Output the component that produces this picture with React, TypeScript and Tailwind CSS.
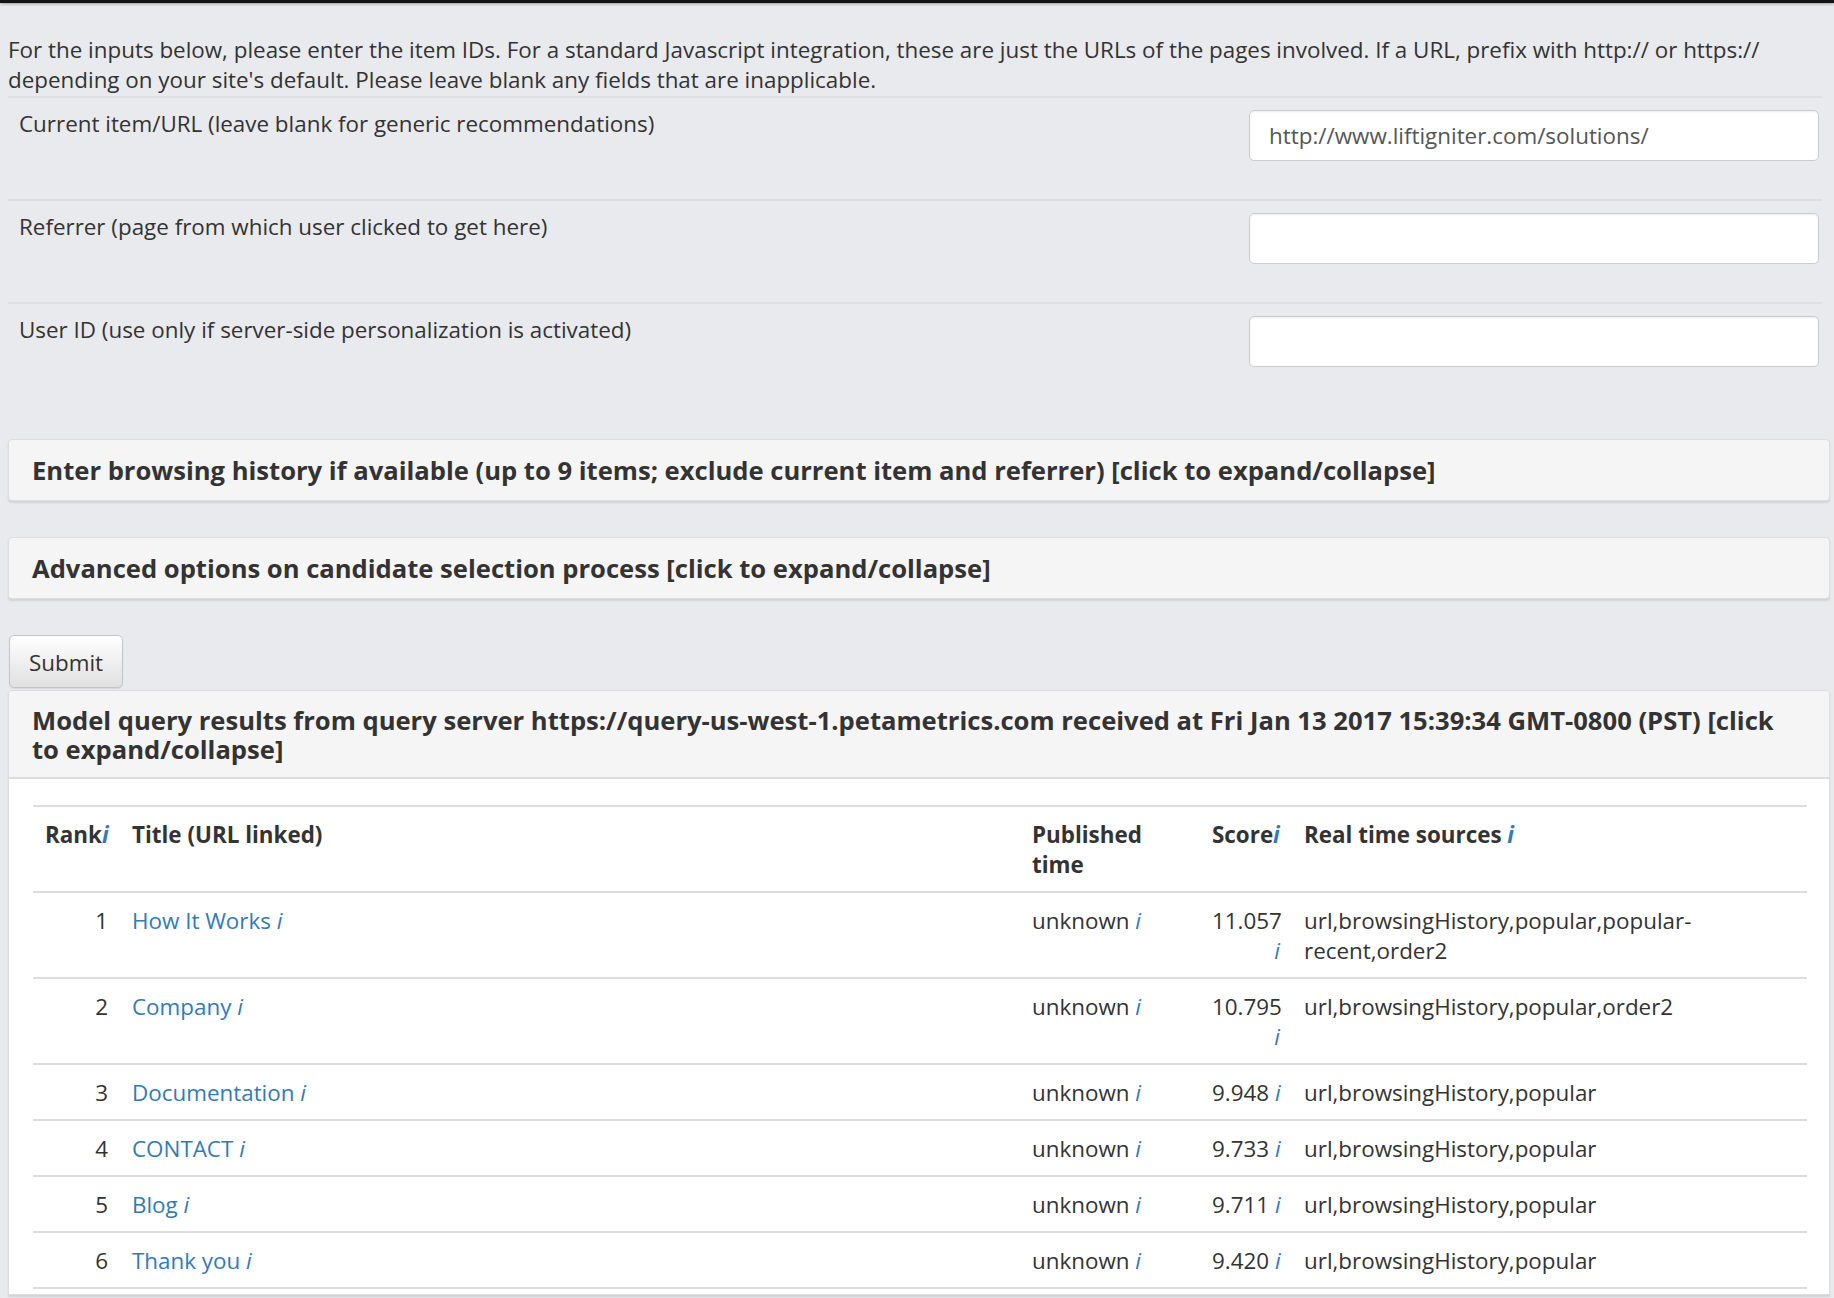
import React from "react";

type Row = {
  rank: number;
  title: string;
  score: string;
  wrapScore?: boolean;
  sources: React.ReactNode;
};

const rows: Row[] = [
  {
    rank: 1,
    title: "How It Works",
    score: "11.057",
    wrapScore: true,
    sources: (
      <>
        url,browsingHistory,popular,popular-
        <br />
        recent,order2
      </>
    ),
  },
  { rank: 2, title: "Company", score: "10.795", wrapScore: true, sources: "url,browsingHistory,popular,order2" },
  { rank: 3, title: "Documentation", score: "9.948", sources: "url,browsingHistory,popular" },
  { rank: 4, title: "CONTACT", score: "9.733", sources: "url,browsingHistory,popular" },
  { rank: 5, title: "Blog", score: "9.711", sources: "url,browsingHistory,popular" },
  { rank: 6, title: "Thank you", score: "9.420", sources: "url,browsingHistory,popular" },
];

function Info() {
  return <i className="text-[#337ab7]">i</i>;
}

function FieldRow(props: { label: string; value?: string }) {
  return (
    <div className="flex items-start justify-between h-[103px] mr-[8px] border-t-2 border-[#dedfe1] pl-[11px] pt-[11px]">
      <label>{props.label}</label>
      <input
        readOnly
        value={props.value ?? ""}
        className="mt-[1px] mr-[3px] w-[570px] h-[51px] px-[19px] bg-white border border-[#cccccc] rounded-[5px] shadow-[inset_0_1px_2px_rgba(0,0,0,0.08)] text-[#555] outline-none"
      />
    </div>
  );
}

function Panel(props: { children: React.ReactNode; className?: string }) {
  return (
    <div
      className={
        "bg-[#f5f5f5] border border-[#dddddd] rounded-[4px] shadow-[0_2px_2px_rgba(0,0,0,0.1)] px-[23px] pt-[16px] pb-[14px] " +
        (props.className ?? "")
      }
    >
      <h4 className="font-bold text-[25.6px] leading-[30px] text-[#333]">{props.children}</h4>
    </div>
  );
}

export default function App() {
  return (
    <div className="min-h-screen bg-[#e9eaed] text-[#333333] text-[22.4px] leading-[30px] font-['Open_Sans',sans-serif]">
      <div className="h-[3px] bg-[#141414] shadow-[0_1px_3px_rgba(0,0,0,0.35)]" />

      <div className="pl-[8px] pr-[4px] pt-[32px]">
        <p className="mb-[1px]">
          For the inputs below, please enter the item IDs. For a standard Javascript integration, these are just the
          URLs of the pages involved. If a URL, prefix with http:// or https://
          <br />
          depending on your site's default. Please leave blank any fields that are inapplicable.
        </p>

        <FieldRow label="Current item/URL (leave blank for generic recommendations)" value="http://www.liftigniter.com/solutions/" />
        <FieldRow label="Referrer (page from which user clicked to get here)" />
        <FieldRow label="User ID (use only if server-side personalization is activated)" />

        <Panel className="mt-[34px]">
          Enter browsing history if available (up to 9 items; exclude current item and referrer) [click to
          expand/collapse]
        </Panel>

        <Panel className="mt-[36px]">Advanced options on candidate selection process [click to expand/collapse]</Panel>

        <button className="mt-[36px] ml-[1px] w-[114px] h-[53px] pt-[2px] border border-[#c4c4c4] rounded-[5px] bg-gradient-to-b from-[#ffffff] to-[#e0e0e0] shadow-[0_1px_1px_rgba(0,0,0,0.08)] text-[#333]">
          Submit
        </button>

        <div className="mt-[2px] bg-white border border-[#dddddd] rounded-t-[4px] shadow-[0_2px_2px_rgba(0,0,0,0.1)]">
          <div className="bg-[#f5f5f5] border-b-2 border-[#dddddd] px-[23px] pt-[15px] pb-[13px] rounded-t-[4px]">
            <h4 className="font-bold text-[25.6px] leading-[29px]">
              Model query results from query server https://query-us-west-1.petametrics.com received at Fri Jan 13
              2017 15:39:34 GMT-0800 (PST) [click
              <br />
              to expand/collapse]
            </h4>
          </div>
          <div className="pl-[24px] pr-[22px] pt-[26px] pb-[5px]">
            <table className="w-full table-fixed border-collapse">
              <colgroup>
                <col className="w-[87px]" />
                <col className="w-[900px]" />
                <col className="w-[180px]" />
                <col className="w-[92px]" />
                <col />
              </colgroup>
              <thead>
                <tr className="border-t-2 border-[#dddddd] align-top">
                  <th className="px-[12px] pt-[13px] pb-[11px] text-left font-bold whitespace-nowrap">
                    Rank<Info />
                  </th>
                  <th className="px-[12px] pt-[13px] pb-[11px] text-left font-bold">Title (URL linked)</th>
                  <th className="px-[12px] pt-[13px] pb-[11px] text-left font-bold">
                    Published
                    <br />
                    time
                  </th>
                  <th className="px-[12px] pt-[13px] pb-[11px] text-left font-bold whitespace-nowrap">
                    Score<Info />
                  </th>
                  <th className="px-[12px] pt-[13px] pb-[11px] text-left font-bold">
                    Real time sources <Info />
                  </th>
                </tr>
              </thead>
              <tbody>
                {rows.map((r) => (
                  <tr key={r.rank} className="border-t-2 border-[#dddddd] align-top">
                    <td className="px-[12px] pt-[13px] pb-[11px] text-right">{r.rank}</td>
                    <td className="px-[12px] pt-[13px] pb-[11px]">
                      <a href="#" className="text-[#337ab7]">
                        {r.title} <i>i</i>
                      </a>
                    </td>
                    <td className="px-[12px] pt-[13px] pb-[11px]">
                      unknown <Info />
                    </td>
                    <td className="px-[12px] pt-[13px] pb-[11px] text-right whitespace-nowrap">
                      {r.wrapScore ? (
                        <>
                          {r.score}
                          <br />
                          <Info />
                        </>
                      ) : (
                        <>
                          {r.score} <Info />
                        </>
                      )}
                    </td>
                    <td className="px-[12px] pt-[13px] pb-[11px]">{r.sources}</td>
                  </tr>
                ))}
                <tr className="border-t-2 border-[#dddddd]">
                  <td colSpan={5} className="h-0 p-0" />
                </tr>
              </tbody>
            </table>
          </div>
        </div>
      </div>
    </div>
  );
}
